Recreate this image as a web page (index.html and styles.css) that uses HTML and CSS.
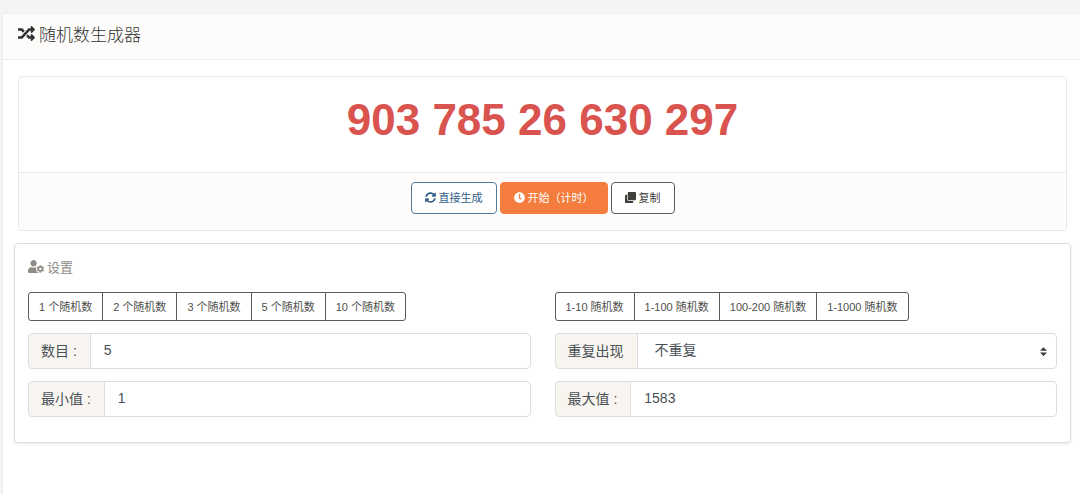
FILE: index.html
```html
<!DOCTYPE html>
<html lang="zh-CN">
<head>
    <meta charset="UTF-8">
    <meta name="viewport" content="width=device-width, initial-scale=1.0">
    <title>随机数生成器</title>
    <link rel="stylesheet" href="styles.css">
</head>
<body>
    <main class="card">
        <header class="card-header">
            <svg class="icon" viewBox="0 0 512 512" aria-hidden="true"><path d="M504.971 359.029c9.373 9.373 9.373 24.569 0 33.941l-80 79.984c-15.01 15.01-40.971 4.49-40.971-16.971V416h-58.785a12.004 12.004 0 0 1-8.773-3.812l-70.556-75.596 53.333-57.143L352 336h32v-39.981c0-21.438 25.943-31.998 40.971-16.971l80 79.981zM12 176h84l52.781 56.551 53.333-57.143-70.556-75.596A11.999 11.999 0 0 0 122.785 96H12c-6.627 0-12 5.373-12 12v56c0 6.627 5.373 12 12 12zm372 0v39.984c0 21.46 25.961 31.98 40.971 16.971l80-79.984c9.373-9.373 9.373-24.569 0-33.941l-80-79.981C409.943 24.021 384 34.582 384 56.019V96h-58.785a12.004 12.004 0 0 0-8.773 3.812L96 336H12c-6.627 0-12 5.373-12 12v56c0 6.627 5.373 12 12 12h110.785c3.326 0 6.503-1.381 8.773-3.812L352 176h32z"/></svg>
            <h1>随机数生成器</h1>
        </header>

        <div class="card-body">
            <!-- 结果 -->
            <section class="result">
                <div class="numbers" id="numbers">903 785 26 630 297</div>
                <div class="actions">
                    <button type="button" class="btn btn-blue">
                        <svg class="icon" viewBox="0 0 512 512" aria-hidden="true"><path d="M370.72 133.28C339.458 104.008 298.888 87.962 255.848 88c-77.458.068-144.328 53.178-162.791 126.85-1.344 5.363-6.122 9.15-11.651 9.15H24.103c-7.498 0-13.194-6.807-11.807-14.176C33.933 94.924 134.813 8 256 8c66.448 0 126.791 26.136 171.315 68.685L463.03 40.97C478.149 25.851 504 36.559 504 57.941V192c0 13.255-10.745 24-24 24H345.941c-21.382 0-32.09-25.851-16.971-40.971l41.75-41.749zM32 296h134.059c21.382 0 32.09 25.851 16.971 40.971l-41.75 41.75c31.262 29.273 71.835 45.319 114.876 45.28 77.418-.07 144.315-53.144 162.787-126.849 1.344-5.363 6.122-9.15 11.651-9.15h57.304c7.498 0 13.194 6.807 11.807 14.176C478.067 417.076 377.187 504 256 504c-66.448 0-126.791-26.136-171.315-68.685L48.97 471.03C33.851 486.149 8 475.441 8 454.059V320c0-13.255 10.745-24 24-24z"/></svg>
                        直接生成
                    </button>
                    <button type="button" class="btn btn-orange">
                        <svg class="icon" viewBox="0 0 512 512" aria-hidden="true"><path d="M256,8C119,8,8,119,8,256S119,504,256,504,504,393,504,256,393,8,256,8Zm92.49,313h0l-20,25a16,16,0,0,1-22.49,2.5h0l-67-49.72a40,40,0,0,1-15-31.23V112a16,16,0,0,1,16-16h32a16,16,0,0,1,16,16V256l58,42.5A16,16,0,0,1,348.49,321Z"/></svg>
                        开始（计时）
                    </button>
                    <button type="button" class="btn btn-dark">
                        <svg class="icon" viewBox="0 0 512 512" aria-hidden="true"><path d="M464 0c26.51 0 48 21.49 48 48v288c0 26.51-21.49 48-48 48H176c-26.51 0-48-21.49-48-48V48c0-26.51 21.49-48 48-48h288M176 416c-44.112 0-80-35.888-80-80V128H48c-26.51 0-48 21.49-48 48v288c0 26.51 21.49 48 48 48h288c26.51 0 48-21.49 48-48v-48H176z"/></svg>
                        复制
                    </button>
                </div>
            </section>

            <!-- 设置 -->
            <section class="settings">
                <h2>
                    <svg class="icon icon-wide" viewBox="0 0 640 512" aria-hidden="true"><path d="M610.5 373.3c2.6-14.1 2.6-28.5 0-42.6l25.8-14.9c3-1.7 4.3-5.2 3.3-8.5-6.7-21.6-18.2-41.2-33.2-57.4-2.3-2.5-6-3.1-9-1.4l-25.8 14.9c-10.9-9.3-23.4-16.5-36.9-21.3v-29.8c0-3.4-2.4-6.4-5.7-7.1-22.3-5-45-4.8-66.2 0-3.3.7-5.7 3.7-5.7 7.1v29.8c-13.5 4.8-26 12-36.9 21.3l-25.8-14.9c-2.9-1.7-6.7-1.1-9 1.4-15 16.2-26.5 35.8-33.2 57.4-1 3.3.4 6.8 3.3 8.5l25.8 14.9c-2.6 14.1-2.6 28.5 0 42.6l-25.8 14.9c-3 1.7-4.3 5.2-3.3 8.5 6.7 21.6 18.2 41.1 33.2 57.4 2.3 2.5 6 3.1 9 1.4l25.8-14.9c10.9 9.3 23.4 16.5 36.9 21.3v29.8c0 3.4 2.4 6.4 5.7 7.1 22.3 5 45 4.8 66.2 0 3.3-.7 5.7-3.7 5.7-7.1v-29.8c13.5-4.8 26-12 36.9-21.3l25.8 14.9c2.9 1.7 6.7 1.1 9-1.4 15-16.2 26.5-35.8 33.2-57.4 1-3.3-.4-6.8-3.3-8.5l-25.8-14.9zM496 400.5c-26.8 0-48.5-21.8-48.5-48.5s21.8-48.5 48.5-48.5 48.5 21.8 48.5 48.5-21.7 48.5-48.5 48.5zM224 256c70.7 0 128-57.3 128-128S294.7 0 224 0 96 57.3 96 128s57.3 128 128 128zm201.2 226.5c-2.3-1.2-4.6-2.6-6.8-3.9l-7.9 4.6c-6 3.4-12.8 5.3-19.6 5.3-10.9 0-21.4-4.6-28.9-12.6-18.3-19.8-32.3-43.9-40.2-69.6-5.5-17.7 1.9-36.4 17.9-45.7l7.9-4.6c-.1-2.6-.1-5.2 0-7.8l-7.9-4.6c-16-9.2-23.4-28-17.9-45.7.9-2.9 2.2-5.8 3.2-8.7-3.8-.3-7.5-1.2-11.4-1.2h-16.7c-22.2 10.2-46.9 16-72.9 16s-50.6-5.8-72.9-16h-16.7C60.2 288 0 348.2 0 422.4V464c0 26.5 21.5 48 48 48h352c10.1 0 19.5-3.2 27.2-8.5-1.2-3.8-2-7.7-2-11.8v-9.2z"/></svg>
                    设置
                </h2>
                <div class="row">
                    <div class="col">
                        <div class="btn-group">
                            <button type="button">1 个随机数</button>
                            <button type="button">2 个随机数</button>
                            <button type="button">3 个随机数</button>
                            <button type="button">5 个随机数</button>
                            <button type="button">10 个随机数</button>
                        </div>
                        <div class="input-group">
                            <label for="count">数目 :</label>
                            <input type="text" id="count" value="5">
                        </div>
                        <div class="input-group">
                            <label for="min">最小值 :</label>
                            <input type="text" id="min" value="1">
                        </div>
                    </div>
                    <div class="col">
                        <div class="btn-group">
                            <button type="button">1-10 随机数</button>
                            <button type="button">1-100 随机数</button>
                            <button type="button">100-200 随机数</button>
                            <button type="button">1-1000 随机数</button>
                        </div>
                        <div class="input-group">
                            <label for="repeat">重复出现</label>
                            <select id="repeat">
                                <option>不重复</option>
                                <option>可重复</option>
                            </select>
                            <svg class="arrows" viewBox="0 0 4 5" aria-hidden="true"><path d="M2 0L0 2h4zm0 5L0 3h4z"/></svg>
                        </div>
                        <div class="input-group">
                            <label for="max">最大值 :</label>
                            <input type="text" id="max" value="1583">
                        </div>
                    </div>
                </div>
            </section>
        </div>
    </main>
</body>
</html>
```
FILE: styles.css
```css
* {
    box-sizing: border-box;
}
body {
    font-family: "Liberation Sans", "Noto Sans CJK SC", sans-serif;
    font-size: 14px;
    background-color: #f4f4f6;
    color: #495057;
    margin: 0;
    padding: 13px 0 0 2px;
    display: flex;
    flex-direction: column;
    min-height: 100vh;
}
button, input, select {
    font: inherit;
    color: inherit;
}
.icon {
    width: 1em;
    height: 1em;
    fill: currentColor;
    flex: none;
}
.icon-wide {
    width: 16px;
    height: 13px;
}
.card {
    flex: 1;
    background-color: #fff;
    border: 1px solid #eeedeb;
    border-width: 1px 0 0 1px;
    border-radius: 4px 0 0 0;
}
.card-header {
    display: flex;
    align-items: center;
    gap: 4px;
    height: 46px;
    padding: 0 15px 7px;
    background-color: #fdfcfa;
    border-bottom: 1px solid #eeedeb;
    border-radius: 4px 0 0 0;
    color: #333;
    font-size: 17px;
}
.card-header h1 {
    margin: 0;
    font-size: 17px;
    font-weight: 300;
}
.card-body {
    padding: 16px 9px 15px 11px;
}

/* 结果 */
.result {
    margin: 0 4px 12px;
    border: 1px solid #e9e7e4;
    border-radius: 4px;
}
.numbers {
    height: 95px;
    padding-top: 17px;
    color: #d9534f;
    font-size: 44px;
    font-weight: bold;
    line-height: 52px;
    text-align: center;
}
.actions {
    display: flex;
    justify-content: center;
    gap: 3px;
    padding: 9px 12px 16px;
    background-color: #fdfcfa;
    border-top: 1px solid #ebe7e3;
    border-radius: 0 0 4px 4px;
}
.btn {
    display: flex;
    align-items: center;
    gap: 3px;
    height: 32px;
    padding: 0 13px 2px;
    border: 1px solid;
    border-radius: 4px;
    background-color: #fff;
    font-size: 11px;
    cursor: pointer;
}
.btn-blue {
    border-color: #55799c;
    color: #325d88;
}
.btn-orange {
    background-color: #f47c3c;
    border-color: #f47c3c;
    color: #fff;
}
.btn-dark {
    border-color: #5c5d59;
    color: #3e3f3a;
}

/* 设置 */
.settings {
    padding: 13px 13px 25px;
    border: 1px solid #dfddd9;
    border-radius: 4px;
    box-shadow: 0 1px 3px rgba(0, 0, 0, 0.1);
}
.settings h2 {
    display: flex;
    align-items: center;
    gap: 3px;
    height: 20px;
    margin: 0 0 15px;
    padding-bottom: 2px;
    color: #8e8c84;
    font-size: 13px;
    font-weight: 400;
}
.row {
    display: flex;
    gap: 24px;
}
.col {
    flex: 1;
    min-width: 0;
    display: flex;
    flex-direction: column;
    gap: 12px;
}
.btn-group {
    display: flex;
}
.btn-group button {
    height: 29px;
    padding: 0 10px 2px;
    border: 1px solid #5c5d59;
    background-color: #fff;
    color: #4f504b;
    font-size: 11px;
    white-space: nowrap;
    cursor: pointer;
}
.btn-group button + button {
    margin-left: -1px;
}
.btn-group button:first-child {
    border-radius: 3px 0 0 3px;
}
.btn-group button:last-child {
    border-radius: 0 3px 3px 0;
}
.input-group {
    position: relative;
    display: flex;
    height: 36px;
}
.input-group label {
    display: flex;
    align-items: center;
    padding: 0 13px 2px 12px;
    background-color: #f8f5f0;
    border: 1px solid #dbdddf;
    border-radius: 4px 0 0 4px;
    white-space: nowrap;
}
.input-group input,
.input-group select {
    flex: 1;
    min-width: 0;
    margin-left: -1px;
    padding: 0 13px 2px;
    border: 1px solid #dbdddf;
    border-radius: 0 4px 4px 0;
    background-color: #fff;
}
.input-group select {
    padding: 0 17px 2px;
    appearance: none;
}
.arrows {
    position: absolute;
    top: 14px;
    right: 10px;
    width: 7px;
    height: 9px;
    fill: #343a40;
    pointer-events: none;
}
```
